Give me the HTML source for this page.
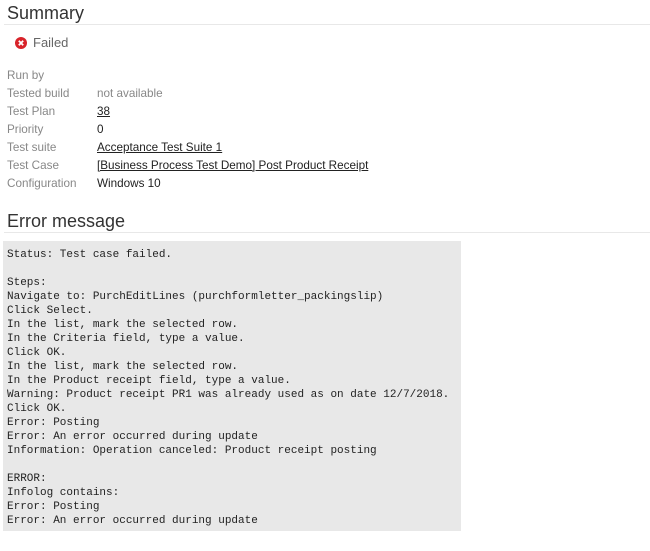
<!DOCTYPE html>
<html><head><style>
body{margin:0;background:#fff;font-family:"Liberation Sans",sans-serif;width:650px;height:551px;overflow:hidden;position:relative}
h2{position:absolute;left:7px;margin:0;font-weight:normal;font-size:18px;color:#333;line-height:22px}
.rule{position:absolute;left:4px;width:646px;height:1px;background:#e8e8e8}
.row{position:absolute;left:7px;font-size:11.7px;line-height:18px;color:#888}
.row span{position:absolute;left:90px;white-space:nowrap;color:#222}
.row a{color:#222;text-decoration:underline}
pre{position:absolute;left:3px;top:241px;width:458px;height:290px;margin:0;padding:7px 0 0 4px;background:#e8e8e8;font-family:"Liberation Mono",monospace;font-size:11px;line-height:14px;color:#222;box-sizing:border-box}
</style></head><body>
<h2 style="top:2px">Summary</h2>
<div class="rule" style="top:24px"></div>
<svg style="position:absolute;left:15px;top:37px" width="12" height="12" viewBox="0 0 12 12"><circle cx="6" cy="6" r="6" fill="#d8232a"/><path d="M3.8 3.8L8.2 8.2M8.2 3.8L3.8 8.2" stroke="#fff" stroke-width="1.8"/></svg>
<div style="position:absolute;left:33px;top:35px;font-size:13px;color:#666">Failed</div>
<div class="row" style="top:67px">Run by</div>
<div class="row" style="top:85px">Tested build<span style="color:#888">not available</span></div>
<div class="row" style="top:103px">Test Plan<span><a>38</a></span></div>
<div class="row" style="top:121px">Priority<span>0</span></div>
<div class="row" style="top:139px">Test suite<span><a>Acceptance Test Suite 1</a></span></div>
<div class="row" style="top:157px">Test Case<span><a>[Business Process Test Demo] Post Product Receipt</a></span></div>
<div class="row" style="top:175px">Configuration<span>Windows 10</span></div>
<h2 style="top:210px">Error message</h2>
<div class="rule" style="top:232px"></div>
<pre>Status: Test case failed.

Steps:
Navigate to: PurchEditLines (purchformletter_packingslip)
Click Select.
In the list, mark the selected row.
In the Criteria field, type a value.
Click OK.
In the list, mark the selected row.
In the Product receipt field, type a value.
Warning: Product receipt PR1 was already used as on date 12/7/2018.
Click OK.
Error: Posting
Error: An error occurred during update
Information: Operation canceled: Product receipt posting

ERROR:
Infolog contains:
Error: Posting
Error: An error occurred during update</pre>
</body></html>
